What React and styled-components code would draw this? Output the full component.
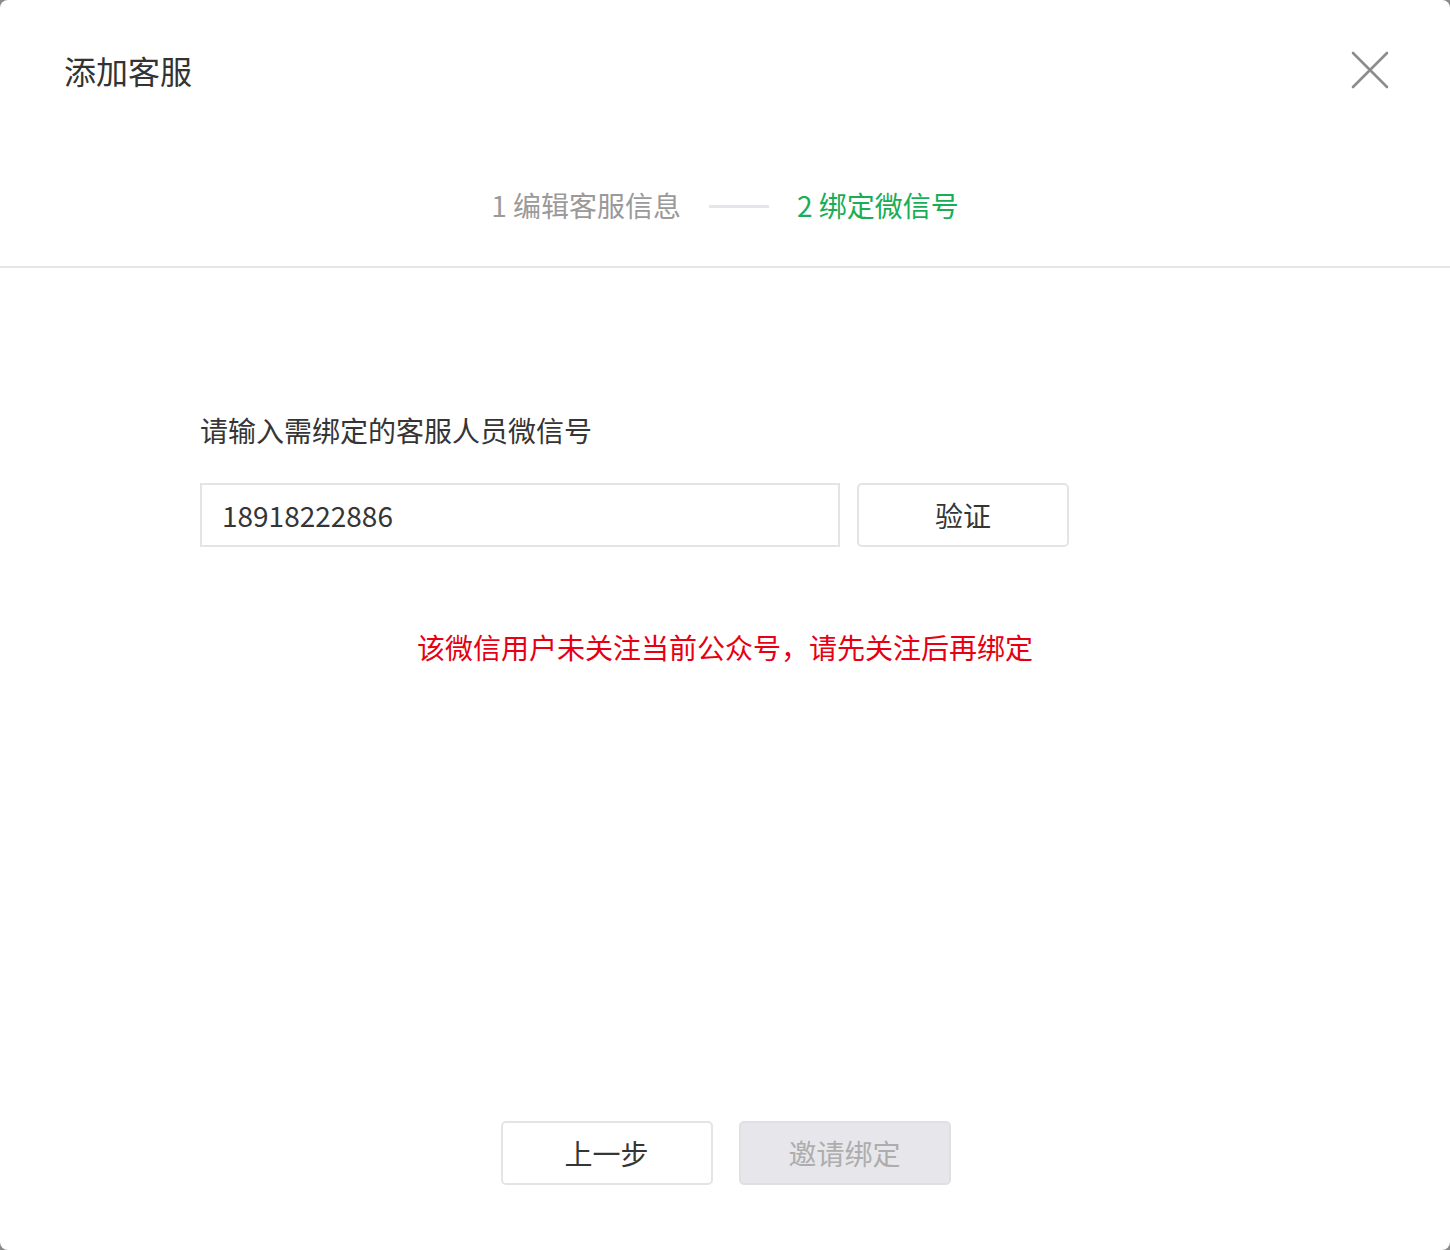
import styled, { createGlobalStyle } from "styled-components";

const GlobalStyle = createGlobalStyle`
  html, body {
    margin: 0;
    padding: 0;
    background: #8a8a8a;
  }
  body {
    font-family: "Noto Sans CJK SC", "Noto Sans", sans-serif;
  }
`;

const Dialog = styled.div`
  width: 1450px;
  height: 1250px;
  background: #ffffff;
  border-radius: 8px;
  display: flex;
  flex-direction: column;
  box-sizing: border-box;
  overflow: hidden;
`;

const Header = styled.div`
  display: flex;
  align-items: center;
  justify-content: space-between;
  padding: 44px 60px 0 64px;
  height: 52px;
`;

const Title = styled.h1`
  margin: 0;
  font-size: 32px;
  font-weight: 400;
  color: #333333;
  line-height: 52px;
`;

const Close = styled.button`
  width: 40px;
  height: 40px;
  border: none;
  background: none;
  padding: 0;
  cursor: pointer;
  display: flex;
  align-items: center;
  justify-content: center;
`;

const Steps = styled.div`
  display: flex;
  align-items: center;
  justify-content: center;
  gap: 28px;
  height: 174px;
  border-bottom: 2px solid #e5e6e8;
  box-sizing: border-box;
  margin-top: -2px;
`;

const Step = styled.span`
  font-size: 28px;
  color: ${(p) => (p.$active ? "#1aad55" : "#9a9a9a")};
  line-height: 40px;
  padding-top: 50px;
`;

const StepLine = styled.span`
  width: 60px;
  height: 3px;
  background: #e3e6ea;
  margin-top: 52px;
`;

const Body = styled.div`
  flex: 1;
  display: flex;
  flex-direction: column;
  padding: 142px 200px 0;
`;

const Label = styled.div`
  font-size: 28px;
  color: #353535;
  line-height: 40px;
`;

const Row = styled.div`
  display: flex;
  gap: 17px;
  margin-top: 33px;
`;

const Input = styled.input`
  width: 640px;
  height: 64px;
  box-sizing: border-box;
  border: 2px solid #e4e4e6;
  padding: 0 20px;
  font-size: 28px;
  font-family: "Noto Sans CJK SC", "Noto Sans", sans-serif;
  color: #353535;
  outline: none;
`;

const Button = styled.button`
  width: 212px;
  height: 64px;
  box-sizing: border-box;
  border: 2px solid ${(p) => (p.$disabled ? "#e0e0e4" : "#e4e4e6")};
  border-radius: 5px;
  background: ${(p) => (p.$disabled ? "#e7e7eb" : "#ffffff")};
  color: ${(p) => (p.$disabled ? "#adadad" : "#353535")};
  font-size: 28px;
  font-family: "Noto Sans CJK SC", "Noto Sans", sans-serif;
  cursor: ${(p) => (p.$disabled ? "default" : "pointer")};
`;

const Error = styled.div`
  margin-top: 80px;
  margin-left: -200px;
  margin-right: -200px;
  text-align: center;
  font-size: 28px;
  color: #e60012;
  line-height: 40px;
`;

const Footer = styled.div`
  display: flex;
  justify-content: center;
  gap: 26px;
  padding: 0 0 65px 1px;
`;

const App = () => {
  return (
    <>
      <GlobalStyle />
      <Dialog>
        <Header>
          <Title>添加客服</Title>
          <Close>
            <svg width="40" height="40" viewBox="0 0 40 40">
              <path d="M3 3 L37 37 M37 3 L3 37" stroke="#8c8c8c" strokeWidth="2.6" strokeLinecap="round" />
            </svg>
          </Close>
        </Header>
        <Steps>
          <Step>1 编辑客服信息</Step>
          <StepLine />
          <Step $active>2 绑定微信号</Step>
        </Steps>
        <Body>
          <Label>请输入需绑定的客服人员微信号</Label>
          <Row>
            <Input defaultValue="18918222886" />
            <Button>验证</Button>
          </Row>
          <Error>该微信用户未关注当前公众号，请先关注后再绑定</Error>
        </Body>
        <Footer>
          <Button>上一步</Button>
          <Button $disabled>邀请绑定</Button>
        </Footer>
      </Dialog>
    </>
  );
};

export default App;
